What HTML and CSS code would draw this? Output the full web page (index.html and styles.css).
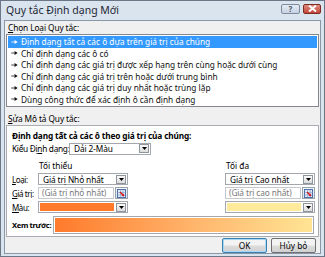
FILE: index.html
```html
<!DOCTYPE html>
<html>
<head>
<meta charset="utf-8">
<link rel="stylesheet" href="styles.css">
</head>
<body>
<div class="window">
  <div class="titlebar">
    <span class="title">Quy tắc Định dạng Mới</span>
    <div class="tbtns">
      <span class="tbtn help">?</span>
      <span class="tbtn close"><svg width="9" height="7" viewBox="0 0 9 7"><path d="M1 0.5 L8 6.5 M8 0.5 L1 6.5" stroke="#fff" stroke-width="2"/></svg></span>
    </div>
  </div>
  <div class="client">
    <div class="lbl1"><u>C</u>họn Loại Quy tắc:</div>
    <div class="list">
      <div class="item sel"><svg class="arr" viewBox="0 0 8 5"><path d="M0 2.5H4" stroke="currentColor" stroke-width="1"/><path d="M4 0L8 2.5L4 5Z" fill="currentColor"/></svg>Định dạng tất cả các ô dựa trên giá trị của chúng</div>
      <div class="item"><svg class="arr" viewBox="0 0 8 5"><path d="M0 2.5H4" stroke="currentColor" stroke-width="1"/><path d="M4 0L8 2.5L4 5Z" fill="currentColor"/></svg>Chỉ định dạng các ô có</div>
      <div class="item"><svg class="arr" viewBox="0 0 8 5"><path d="M0 2.5H4" stroke="currentColor" stroke-width="1"/><path d="M4 0L8 2.5L4 5Z" fill="currentColor"/></svg>Chỉ định dạng các giá trị được xếp hạng trên cùng hoặc dưới cùng</div>
      <div class="item"><svg class="arr" viewBox="0 0 8 5"><path d="M0 2.5H4" stroke="currentColor" stroke-width="1"/><path d="M4 0L8 2.5L4 5Z" fill="currentColor"/></svg>Chỉ định dạng các giá trị trên hoặc dưới trung bình</div>
      <div class="item"><svg class="arr" viewBox="0 0 8 5"><path d="M0 2.5H4" stroke="currentColor" stroke-width="1"/><path d="M4 0L8 2.5L4 5Z" fill="currentColor"/></svg>Chỉ định dạng các giá trị duy nhất hoặc trùng lặp</div>
      <div class="item"><svg class="arr" viewBox="0 0 8 5"><path d="M0 2.5H4" stroke="currentColor" stroke-width="1"/><path d="M4 0L8 2.5L4 5Z" fill="currentColor"/></svg>Dùng công thức để xác định ô cần định dạng</div>
    </div>
    <div class="lbl2"><u>S</u>ửa Mô tả Quy tắc:</div>
    <div class="panel">
      <div class="heading">Định dạng tất cả các ô theo giá trị của chúng:</div>
      <div class="kieu">
        <span class="klabel">Kiểu Đị<u>n</u>h dạng:</span>
        <div class="combo kcombo"><span class="ctext">Dải 2-Màu</span><span class="dd"><svg width="5" height="3" viewBox="0 0 5 3"><path d="M0 0H5L2.5 3Z" fill="#000"/></svg></span></div>
      </div>
      <div class="grid">
        <span></span><span class="colh">Tối thiểu</span><span></span><span class="colh">Tối đa</span>

        <span class="rlabel"><u>L</u>oại:</span>
        <div class="combo"><span class="ctext">Giá trị Nhỏ nhất</span><span class="dd"><svg width="5" height="3" viewBox="0 0 5 3"><path d="M0 0H5L2.5 3Z" fill="#000"/></svg></span></div>
        <span></span>
        <div class="combo"><span class="ctext">Giá trị Cao nhất</span><span class="dd"><svg width="5" height="3" viewBox="0 0 5 3"><path d="M0 0H5L2.5 3Z" fill="#000"/></svg></span></div>

        <span class="rlabel"><u>G</u>iá trị:</span>
        <div class="inrow"><span class="input">(Giá trị nhỏ nhất)</span><span class="rbtn"><svg width="9" height="9" viewBox="0 0 9 9"><rect x="0.5" y="0.5" width="8" height="8" fill="#dfe9f7" stroke="#4a6fa8"/><path d="M0.5 3.5H8.5M3.5 0.5V8.5M6 0.5V8.5M0.5 6H8.5" stroke="#7f9cc8" stroke-width="0.6"/><path d="M3 3L7 7" stroke="#d62020" stroke-width="1.6"/><path d="M7 4.5V7H4.5Z" fill="#d62020"/></svg></span></div>
        <span></span>
        <div class="inrow"><span class="input">(Giá trị cao nhất)</span><span class="rbtn"><svg width="9" height="9" viewBox="0 0 9 9"><rect x="0.5" y="0.5" width="8" height="8" fill="#dfe9f7" stroke="#4a6fa8"/><path d="M0.5 3.5H8.5M3.5 0.5V8.5M6 0.5V8.5M0.5 6H8.5" stroke="#7f9cc8" stroke-width="0.6"/><path d="M3 3L7 7" stroke="#d62020" stroke-width="1.6"/><path d="M7 4.5V7H4.5Z" fill="#d62020"/></svg></span></div>

        <span class="rlabel"><u>M</u>àu:</span>
        <div class="combo color"><span class="swatch orange"></span><span class="dd"><svg width="5" height="3" viewBox="0 0 5 3"><path d="M0 0H5L2.5 3Z" fill="#000"/></svg></span></div>
        <span></span>
        <div class="combo color"><span class="swatch yellow"></span><span class="dd"><svg width="5" height="3" viewBox="0 0 5 3"><path d="M0 0H5L2.5 3Z" fill="#000"/></svg></span></div>
      </div>
      <div class="preview-row">
        <span class="plabel">Xem trước:</span>
        <div class="preview"><div class="grad"></div></div>
      </div>
    </div>
    <div class="buttons">
      <span class="btn ok">OK</span>
      <span class="btn">Hủy bỏ</span>
    </div>
  </div>
</div>
</body>
</html>
```

FILE: styles.css
```css
html, body {
  margin: 0;
  padding: 0;
  background: #ffffff;
}
body {
  font-family: "Noto Sans", "Open Sans", sans-serif;
  font-size: 8.3px;
  color: #000;
}
.window {
  width: 325px;
  height: 257px;
  box-sizing: border-box;
  border: 1px solid #6b7787;
  background: #dae4ef;
  display: flex;
  flex-direction: column;
  padding: 0 3px 3px 3px;
}
.titlebar {
  height: 19px;
  display: flex;
  align-items: center;
  justify-content: space-between;
  flex: none;
}
.title {
  font-size: 10.5px;
  padding-left: 2px;
  color: #1e2835;
  margin-top: -1px;
}
.tbtns {
  display: flex;
  gap: 3px;
  align-items: center;
  margin-top: -4px;
}
.tbtn {
  height: 10px;
  box-sizing: border-box;
  border: 1px solid #7d8b9c;
  border-radius: 2px;
  display: flex;
  align-items: center;
  justify-content: center;
  font-size: 8px;
  font-weight: bold;
}
.help {
  width: 19px;
  background: linear-gradient(#e4ebf3, #c7d3e2);
  color: #4d5a6b;
}
.close {
  width: 18px;
  background: linear-gradient(#e08b7f, #c4453a);
  border-color: #7f2a23;
}
.client {
  flex: 1;
  background: #f0f0f0;
  border: 1px solid #8a97a8;
  display: flex;
  flex-direction: column;
  padding: 0 1px;
}
.lbl1 {
  height: 13px;
  line-height: 13px;
  padding-left: 2px;
  letter-spacing: -0.1px;
}
.list {
  height: 73px;
  box-sizing: border-box;
  background: #fff;
  border: 1px solid #828790;
  padding: 1px 1px;
  overflow: hidden;
}
.item {
  height: 11.5px;
  line-height: 11.5px;
  display: flex;
  align-items: center;
  white-space: nowrap;
  padding-left: 2px;
  color: #111;
}
.item.sel {
  background: #3399ff;
  color: #fff;
}
.arr {
  width: 7px;
  height: 4px;
  margin-right: 3px;
  margin-left: 1px;
  flex: none;
}
.lbl2 {
  margin-top: 6px;
  height: 12px;
  line-height: 12px;
  padding-left: 2px;
  letter-spacing: -0.1px;
}
.panel {
  height: 112px;
  box-sizing: border-box;
  background: #fff;
  border: 1px solid #a8acb3;
  padding: 4px 3px 0 5px;
  display: flex;
  flex-direction: column;
}
.heading {
  font-weight: bold;
  height: 12px;
  line-height: 12px;
  letter-spacing: -0.15px;
  white-space: nowrap;
}
.kieu {
  display: flex;
  align-items: center;
  height: 13px;
}
.klabel {
  width: 57px;
  flex: none;
  white-space: nowrap;
  letter-spacing: -0.3px;
}
.combo {
  height: 12px;
  box-sizing: border-box;
  border: 1px solid #a4a7ad;
  background: #fff;
  display: flex;
  align-items: center;
  justify-content: space-between;
  padding-left: 4px;
  padding-right: 1px;
}
.kcombo {
  width: 82px;
}
.ctext {
  white-space: nowrap;
  letter-spacing: -0.1px;
}
.dd {
  width: 10px;
  height: 9px;
  box-sizing: border-box;
  border: 1px solid #8f959c;
  background: linear-gradient(#fafafa, #dcdcdc);
  display: flex;
  align-items: center;
  justify-content: center;
  flex: none;
}
.grid {
  display: grid;
  grid-template-columns: 26px 90px 1fr 90px;
  grid-template-rows: 16px 14px 14px 14px;
  align-items: center;
  margin-top: 1px;
}
.colh {
  align-self: end;
  padding-left: 1px;
  line-height: 12px;
}
.rlabel {
  white-space: nowrap;
  letter-spacing: -0.4px;
  font-size: 8px;
}
.inrow {
  display: flex;
  align-items: center;
  height: 12px;
}
.input {
  flex: 1;
  height: 12px;
  box-sizing: border-box;
  border: 1px solid #c5c9ce;
  background: #fff;
  color: #7a7a7a;
  line-height: 10px;
  padding-left: 3px;
  white-space: nowrap;
  overflow: hidden;
  letter-spacing: -0.1px;
}
.rbtn {
  width: 13px;
  height: 12px;
  box-sizing: border-box;
  border: 1px solid #98a1ac;
  background: linear-gradient(#f4f7fb, #d8e0ea);
  display: flex;
  align-items: center;
  justify-content: center;
  margin-left: 1px;
  flex: none;
}
.combo.color {
  padding-left: 1px;
  gap: 2px;
}
.swatch {
  flex: 1;
  height: 8px;
}
.orange {
  background: #ff7a2b;
}
.yellow {
  background: #ffe99a;
}
.preview-row {
  display: flex;
  align-items: center;
  margin-top: 2px;
  height: 18px;
  gap: 2px;
}
.plabel {
  font-weight: bold;
  flex: none;
  white-space: nowrap;
  letter-spacing: -0.35px;
  font-size: 7.6px;
}
.preview {
  flex: 1;
  height: 18px;
  box-sizing: border-box;
  border: 1px solid #a4a7ad;
  padding: 1px;
  background: #fff;
  margin-right: 1px;
}
.grad {
  height: 100%;
  background: linear-gradient(to right, #ff7a2b, #ffb66d 55%, #ffe494);
}
.buttons {
  display: flex;
  justify-content: flex-end;
  gap: 4px;
  padding-top: 1px;
  padding-right: 3px;
}
.btn {
  width: 45px;
  height: 15px;
  box-sizing: border-box;
  border: 1px solid #707070;
  border-radius: 2px;
  background: linear-gradient(#f3f3f3 45%, #dcdcdc 55%, #d0d0d0);
  display: flex;
  align-items: center;
  justify-content: center;
}
.btn.ok {
  border-color: #3c7fb1;
  box-shadow: inset 0 0 0 1px #a6d8f3;
}
u {
  text-decoration: underline;
}
```
